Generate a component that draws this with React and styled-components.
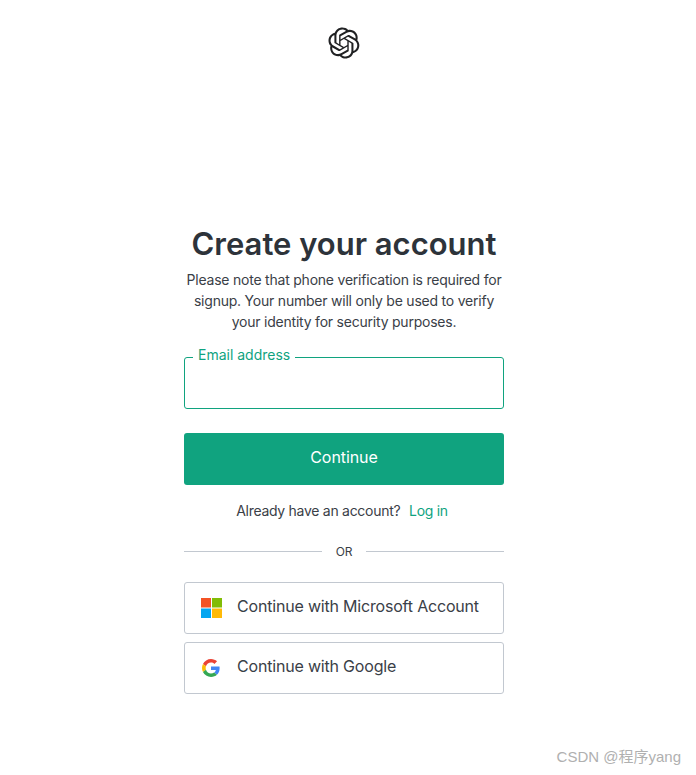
import React from "react";
import styled, { createGlobalStyle } from "styled-components";

const Global = createGlobalStyle`
  html, body { margin: 0; padding: 0; background: #fff; }
  body { font-family: Inter, "Liberation Sans", sans-serif; color: #2d333a; }
`;

const Page = styled.main`
  position: relative;
  width: 696px;
  height: 775px;
  overflow: hidden;
  display: flex;
  flex-direction: column;
  align-items: center;
  padding: 27px 8px 0 0;
  box-sizing: border-box;
`;

const Logo = styled.svg`
  width: 32px;
  height: 32px;
  display: block;
  flex: none;
  margin-bottom: 167px;
`;

const Panel = styled.section`
  width: 320px;
  display: flex;
  flex-direction: column;
`;

const Title = styled.h1`
  margin: 0 0 7px;
  font-size: 31px;
  line-height: 36px;
  font-weight: 600;
  text-align: center;
  white-space: nowrap;
  color: #2d333a;
`;

const Note = styled.p`
  margin: 0 0 25px;
  font-size: 14px;
  line-height: 21px;
  letter-spacing: -0.22px;
  text-align: center;
  color: #3a4047;
`;

const Field = styled.div`
  position: relative;
  height: 52px;
  box-sizing: border-box;
  border: 1px solid #10a37f;
  border-radius: 3px;
  margin-bottom: 24px;
`;

const FieldLabel = styled.label`
  position: absolute;
  left: 8px;
  top: -12px;
  padding: 0 5px;
  background: #fff;
  color: #10a37f;
  font-size: 14px;
  line-height: 18px;
`;

const FieldInput = styled.input`
  display: block;
  width: 100%;
  height: 100%;
  box-sizing: border-box;
  border: 0;
  outline: 0;
  padding: 0 16px;
  background: transparent;
  font: inherit;
`;

const Primary = styled.button`
  height: 52px;
  border: 0;
  border-radius: 3px;
  background: #10a37f;
  color: #fff;
  font-family: inherit;
  font-size: 16px;
  font-weight: 400;
  letter-spacing: -0.08px;
  padding: 0 0 4px;
  margin-bottom: 16px;
`;

const LoginLine = styled.p`
  margin: 0 0 20px;
  padding-right: 4px;
  font-size: 14px;
  line-height: 20px;
  letter-spacing: -0.28px;
  text-align: center;
  color: #3a4047;
`;

const LoginLink = styled.a`
  color: #10a37f;
  margin-left: 5px;
  text-decoration: none;
`;

const Divider = styled.div`
  display: flex;
  align-items: center;
  height: 20px;
  gap: 14px;
  font-size: 12px;
  letter-spacing: -0.2px;
  color: #3a4047;
  margin-bottom: 21px;
  &::before, &::after {
    content: "";
    flex: 1;
    height: 1px;
    background: #c2c8d0;
  }
`;

const Socials = styled.div`
  display: flex;
  flex-direction: column;
  gap: 8px;
`;

const SocialButton = styled.button`
  height: 52px;
  box-sizing: border-box;
  display: flex;
  align-items: center;
  background: #fff;
  border: 1px solid #c2c8d0;
  border-radius: 3px;
  padding: 0 0 0 15px;
  color: #3a4047;
  font-family: inherit;
  font-size: 16px;
  letter-spacing: -0.19px;
  text-align: left;
`;

const SocialIcon = styled.span`
  width: 22px;
  height: 20px;
  flex: none;
  display: flex;
  align-items: center;
  justify-content: center;
  margin-right: 15px;
`;

const SocialText = styled.span`
  display: block;
  padding-bottom: 4px;
`;

const Watermark = styled.div`
  position: absolute;
  right: 15px;
  bottom: 9px;
  font-size: 15px;
  line-height: 18px;
  color: #b0b0b0;
  font-family: "Liberation Sans", "Noto Sans CJK SC", sans-serif;
`;

const OPENAI = "M37.5324 16.8707C37.9808 15.5241 38.1363 14.0974 37.9886 12.6859C37.8409 11.2744 37.3934 9.91076 36.676 8.68622C35.6126 6.83404 33.9882 5.3676 32.0373 4.4985C30.0864 3.62941 27.9098 3.40259 25.8215 3.85078C24.8796 2.7893 23.7219 1.94125 22.4257 1.36341C21.1295 0.785575 19.7249 0.491269 18.3058 0.500197C16.1708 0.495044 14.0893 1.16803 12.3614 2.42214C10.6335 3.67624 9.34853 5.44666 8.6917 7.47815C7.30085 7.76286 5.98686 8.3414 4.8377 9.17505C3.68854 10.0087 2.73073 11.0782 2.02839 12.312C0.956464 14.1591 0.498905 16.2988 0.721698 18.4228C0.944492 20.5467 1.83612 22.5449 3.268 24.1293C2.81966 25.4759 2.66413 26.9026 2.81182 28.3141C2.95951 29.7256 3.40701 31.0892 4.12437 32.3138C5.18791 34.1659 6.8123 35.6322 8.76321 36.5013C10.7141 37.3704 12.8907 37.5973 14.9789 37.1492C15.9208 38.2107 17.0786 39.0587 18.3747 39.6366C19.6709 40.2144 21.0755 40.5087 22.4946 40.4998C24.6307 40.5054 26.7133 39.8321 28.4418 38.5772C30.1704 37.3223 31.4556 35.5506 32.1119 33.5179C33.5027 33.2332 34.8167 32.6547 35.9659 31.821C37.115 30.9874 38.0728 29.9178 38.7752 28.684C39.8458 26.8371 40.3023 24.6979 40.0789 22.5748C39.8556 20.4517 38.9639 18.4544 37.5324 16.8707ZM22.4978 37.8849C20.7443 37.8874 19.0459 37.2733 17.6994 36.1501C17.7601 36.117 17.8666 36.0586 17.936 36.0161L25.9004 31.4156C26.1003 31.3019 26.2663 31.137 26.3813 30.9378C26.4964 30.7386 26.5563 30.5124 26.5549 30.2825V19.0542L29.9213 20.998C29.9389 21.0068 29.9541 21.0198 29.9656 21.0359C29.977 21.052 29.9842 21.0707 29.9867 21.0902V30.3889C29.9842 32.375 29.1946 34.2791 27.7909 35.6841C26.3872 37.0892 24.4838 37.8806 22.4978 37.8849ZM6.39227 31.0064C5.51397 29.4888 5.19742 27.7107 5.49804 25.9832C5.55718 26.0187 5.66048 26.0818 5.73461 26.1244L13.699 30.7248C13.8975 30.8408 14.1233 30.902 14.3532 30.902C14.583 30.902 14.8088 30.8408 15.0073 30.7248L24.731 25.1103V28.9979C24.7321 29.0177 24.7283 29.0376 24.7199 29.0556C24.7115 29.0736 24.6988 29.0893 24.6829 29.1012L16.6317 33.7497C14.9096 34.7416 12.8643 35.0097 10.9447 34.4954C9.02506 33.9811 7.38785 32.7263 6.39227 31.0064ZM4.29707 13.6194C5.17156 12.0998 6.55279 10.9364 8.19885 10.3327C8.19885 10.4013 8.19491 10.5228 8.19491 10.6071V19.808C8.19351 20.0378 8.25334 20.2638 8.36823 20.4629C8.48312 20.6619 8.64893 20.8267 8.84863 20.9404L18.5723 26.5542L15.206 28.4979C15.1894 28.5089 15.1703 28.5155 15.1505 28.5173C15.1307 28.5191 15.1107 28.516 15.0924 28.5082L7.04046 23.8557C5.32135 22.8601 4.06716 21.2235 3.55289 19.3046C3.03862 17.3858 3.30624 15.3413 4.29707 13.6194ZM31.955 20.0556L22.2312 14.4411L25.5976 12.4981C25.6142 12.4872 25.6333 12.4805 25.6531 12.4787C25.6729 12.4769 25.6928 12.4801 25.7111 12.4879L33.7631 17.1364C34.9967 17.849 36.0017 18.8982 36.6606 20.1613C37.3194 21.4244 37.6047 22.849 37.4832 24.2684C37.3617 25.6878 36.8382 27.0432 35.9743 28.1759C35.1103 29.3086 33.9415 30.1717 32.6047 30.6641C32.6047 30.5947 32.6047 30.4733 32.6047 30.3889V21.188C32.6066 20.9586 32.5474 20.7328 32.4332 20.5338C32.319 20.3348 32.154 20.1698 31.955 20.0556ZM35.3055 15.0128C35.2464 14.9765 35.1431 14.9142 35.069 14.8717L27.1045 10.2712C26.906 10.1554 26.6803 10.0943 26.4504 10.0943C26.2206 10.0943 25.9948 10.1554 25.7963 10.2712L16.0726 15.8858V11.9982C16.0715 11.9783 16.0753 11.9585 16.0837 11.9405C16.0921 11.9225 16.1048 11.9068 16.1207 11.8949L24.1719 7.25025C25.4053 6.53903 26.8158 6.19376 28.2383 6.25482C29.6608 6.31589 31.0364 6.78077 32.2044 7.59508C33.3723 8.40939 34.2842 9.53945 34.8334 10.8531C35.3826 12.1667 35.5464 13.6095 35.3055 15.0128ZM14.2424 21.9419L10.8752 19.9981C10.8576 19.9893 10.8423 19.9763 10.8309 19.9602C10.8195 19.9441 10.8122 19.9254 10.8098 19.9058V10.6071C10.8107 9.18295 11.2173 7.78848 11.9819 6.58696C12.7466 5.38544 13.8377 4.42659 15.1275 3.82264C16.4173 3.21869 17.8524 2.99464 19.2649 3.1767C20.6775 3.35876 22.0089 3.93941 23.1034 4.85067C23.0427 4.88379 22.937 4.94215 22.8668 4.98473L14.9024 9.58517C14.7025 9.69878 14.5366 9.86356 14.4215 10.0626C14.3065 10.2616 14.2466 10.4877 14.2479 10.7175L14.2424 21.9419ZM16.071 17.9991L20.4018 15.4978L24.7325 17.9975V22.9985L20.4018 25.4983L16.071 22.9985V17.9991Z";

const MicrosoftIcon = () => (
  <svg width="21" height="20" viewBox="0 0 21 20" aria-hidden="true">
    <rect x="0" y="0" width="10" height="9.5" fill="#f35325" />
    <rect x="11" y="0" width="10" height="9.5" fill="#81bc06" />
    <rect x="0" y="10.5" width="10" height="9.5" fill="#05a6f0" />
    <rect x="11" y="10.5" width="10" height="9.5" fill="#ffba08" />
  </svg>
);

const GoogleIcon = () => (
  <svg width="18" height="18" viewBox="0 0 48 48" aria-hidden="true">
    <path fill="#EA4335" d="M24 9.5c3.54 0 6.71 1.22 9.21 3.6l6.85-6.85C35.9 2.38 30.47 0 24 0 14.62 0 6.51 5.38 2.56 13.22l7.98 6.19C12.43 13.72 17.74 9.5 24 9.5z" />
    <path fill="#4285F4" d="M46.98 24.55c0-1.57-.15-3.09-.38-4.55H24v9.02h12.94c-.58 2.96-2.26 5.48-4.78 7.18l7.73 6c4.51-4.18 7.09-10.36 7.09-17.65z" />
    <path fill="#FBBC05" d="M10.53 28.59c-.48-1.45-.76-2.99-.76-4.59s.27-3.14.76-4.59l-7.98-6.19C.92 16.46 0 20.12 0 24c0 3.88.92 7.54 2.56 10.78l7.97-6.19z" />
    <path fill="#34A853" d="M24 48c6.48 0 11.93-2.13 15.89-5.81l-7.73-6c-2.15 1.45-4.92 2.3-8.16 2.3-6.26 0-11.57-4.22-13.47-9.91l-7.98 6.19C6.51 42.62 14.62 48 24 48z" />
  </svg>
);

export default function App() {
  return (
    <>
      <Global />
      <Page>
        <Logo viewBox="0 0 41 41" aria-label="OpenAI">
          <path fill="#202123" d={OPENAI} />
        </Logo>
        <Panel>
          <Title>Create your account</Title>
          <Note>
            Please note that phone verification is required for
            <br />
            signup. Your number will only be used to verify
            <br />
            your identity for security purposes.
          </Note>
          <Field>
            <FieldLabel htmlFor="email">Email address</FieldLabel>
            <FieldInput id="email" type="email" />
          </Field>
          <Primary>Continue</Primary>
          <LoginLine>
            Already have an account? <LoginLink href="#">Log in</LoginLink>
          </LoginLine>
          <Divider>OR</Divider>
          <Socials>
            <SocialButton>
              <SocialIcon><MicrosoftIcon /></SocialIcon>
              <SocialText>Continue with Microsoft Account</SocialText>
            </SocialButton>
            <SocialButton>
              <SocialIcon><GoogleIcon /></SocialIcon>
              <SocialText>Continue with Google</SocialText>
            </SocialButton>
          </Socials>
        </Panel>
        <Watermark>CSDN @程序yang</Watermark>
      </Page>
    </>
  );
}
